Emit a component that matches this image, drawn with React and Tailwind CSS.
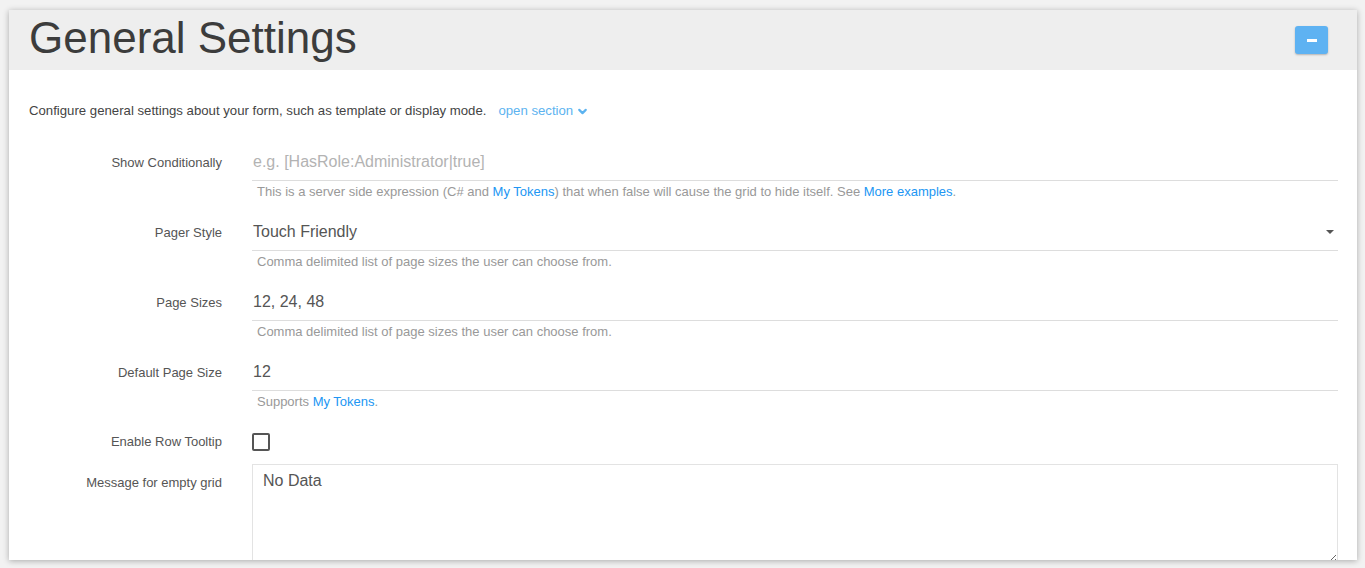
import React from 'react';
import { ChevronDown } from 'lucide-react';

const Row = ({ label, children, help }) => (
  <div className="grid grid-cols-[193px_1fr] gap-x-[30px] mb-[13px]">
    <div className="h-[37px] flex items-center justify-end text-[13px] text-[#555]">{label}</div>
    <div>
      <div className="h-[37px] border-b border-[#dddddd] flex items-center pl-px text-[16px] text-[#555]">
        {children}
      </div>
      <div className="mt-[2px] pl-[5px] text-[13px] leading-[18px] text-[#999]">{help}</div>
    </div>
  </div>
);

const Link = ({ children }) => <a className="text-[#2196f3]">{children}</a>;

export default function App() {
  return (
    <div
      className="min-h-screen bg-[#f2f2f2] pt-[10px] pl-[9px] pr-[8px]"
      style={{ fontFamily: '"Liberation Sans", Arial, sans-serif' }}
    >
      <div className="bg-white shadow-[0_1px_6px_rgba(0,0,0,0.3)] h-[550px] overflow-hidden">
        <div className="h-[60px] bg-[#eeeeee] flex items-center justify-between pl-[20px] pr-[29px]">
          <h1 className="text-[44px] leading-none text-[#3c3c3c] -mt-[4px]">General Settings</h1>
          <button className="w-[33px] h-[28px] rounded-[3px] bg-[#5eb2f2] shadow-[0_1px_2px_rgba(0,0,0,0.25)] flex items-center justify-center">
            <span className="block w-[10px] h-[3px] bg-white" />
          </button>
        </div>

        <div className="pl-[20px] pr-[19px] pt-[32px]">
          <p className="text-[13.2px] leading-[18px] text-[#444] flex items-center">
            Configure general settings about your form, such as template or display mode.
            <a className="ml-[12px] text-[#5cb3f0] flex items-center gap-[3px]">
              open section <ChevronDown size={13} strokeWidth={4} />
            </a>
          </p>

          <div className="mt-[24px]">
            <Row
              label="Show Conditionally"
              help={
                <>
                  This is a server side expression (C# and <Link>My Tokens</Link>) that when false will cause the grid to hide itself. See <Link>More examples</Link>.
                </>
              }
            >
              <span className="text-[#b3b3b3]">e.g. [HasRole:Administrator|true]</span>
            </Row>

            <Row label="Pager Style" help="Comma delimited list of page sizes the user can choose from.">
              <div className="flex items-center justify-between w-full pr-[4px]">
                <span>Touch Friendly</span>
                <span className="block w-0 h-0 border-l-[4px] border-r-[4px] border-t-[4px] border-l-transparent border-r-transparent border-t-[#555]" />
              </div>
            </Row>

            <Row label="Page Sizes" help="Comma delimited list of page sizes the user can choose from.">
              12, 24, 48
            </Row>

            <Row
              label="Default Page Size"
              help={
                <>
                  Supports <Link>My Tokens</Link>.
                </>
              }
            >
              12
            </Row>

            <div className="grid grid-cols-[193px_1fr] gap-x-[30px] mt-[1px]">
              <div className="h-[36px] flex items-center justify-end text-[13px] text-[#555]">Enable Row Tooltip</div>
              <div className="h-[36px] flex items-center">
                <span className="block w-[18px] h-[18px] border-2 border-[#555] rounded-[2px]" />
              </div>
            </div>

            <div className="grid grid-cols-[193px_1fr] gap-x-[30px] mt-[4px]">
              <div className="pt-[10px] text-right text-[13px] leading-[18px] text-[#555]">Message for empty grid</div>
              <textarea
                className="h-[100px] border border-[#e3e3e3] px-[10px] py-[4px] text-[16px] text-[#555] outline-none"
                defaultValue="No Data"
              />
            </div>
          </div>
        </div>
      </div>
    </div>
  );
}
